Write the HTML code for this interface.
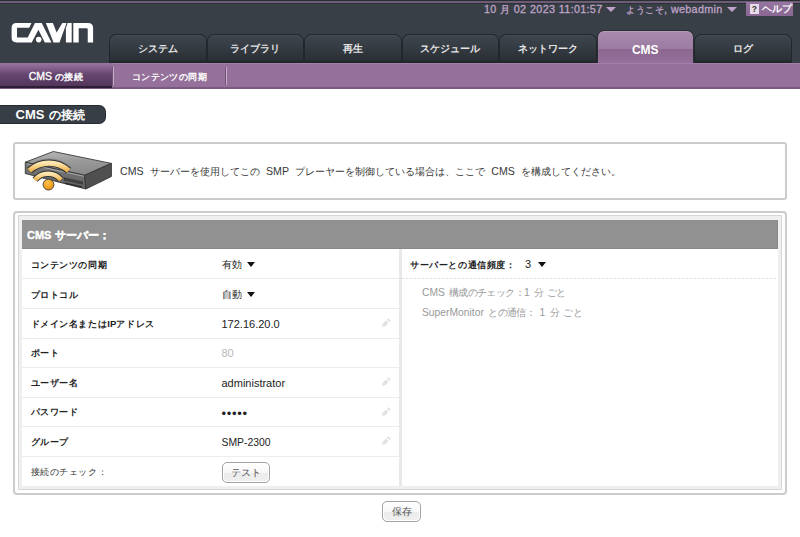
<!DOCTYPE html>
<html><head><meta charset="utf-8">
<style>
*{box-sizing:border-box;margin:0;padding:0}
html,body{width:800px;height:537px;overflow:hidden;background:#fff;font-family:"Liberation Sans",sans-serif;font-size:11px;color:#333}
.abs{position:absolute}
.j{font-size:var(--j,1em);letter-spacing:var(--js,0px)}
#hdr{position:absolute;left:0;top:0;width:800px;height:63px;background:#393f47}
#l0{position:absolute;left:0;top:0;width:800px;height:1px;background:#27302f}
#l1{position:absolute;left:0;top:1px;width:800px;height:2px;background:#6f5a79}
#l2{position:absolute;left:0;top:3px;width:800px;height:1px;background:#2a3434}
.tab{position:absolute;top:34px;height:29px;width:97.5px;border:1px solid #22272b;border-bottom:none;border-radius:7px 7px 0 0;
 background:linear-gradient(#3e454d,#353b42 45%,#2a3035 88%,#1f2428);color:#e4e4e4;font-weight:bold;font-size:11px;text-align:center;line-height:27px;--j:0.92em;
 box-shadow:inset 0 1px 0 #454c54}
.tab.on{top:30px;height:33px;background:linear-gradient(#a88bad,#9c7ca2 55%,#8c6891 55%,#94709a);color:#fff;line-height:39px;font-size:12px;border-color:#2a2f33;box-shadow:inset 0 1px 0 #b49ab8}
#sub{position:absolute;left:0;top:63px;width:800px;height:26px;background:#94709a;border-top:1px solid #a47fab;border-bottom:2px solid #7a5a81}
.subon{position:absolute;left:0;top:63px;width:112px;height:25px;background:linear-gradient(#9a77a2,#654670 50%,#53365c);border-bottom:2px solid #2e1b36}
.subt{position:absolute;top:63px;height:25px;line-height:26px;color:#fff;font-size:10.5px;font-weight:normal;-webkit-text-stroke:0.35px #fff;text-align:center;--j:9.25px;--js:0.4px}
.div1{position:absolute;top:67px;width:1px;height:18px;background:#6f5276}
.div2{position:absolute;top:67px;width:1px;height:18px;background:#c8b0cc}

.toptxt{position:absolute;top:2.2px;height:14px;line-height:14px;color:#bea3c6;font-size:10.8px;white-space:nowrap;--j:0.88em;word-spacing:0.3px;letter-spacing:0.3px;-webkit-text-stroke:0.3px #bea3c6}
.tri{display:inline-block;width:0;height:0;border-left:5px solid transparent;border-right:5px solid transparent;border-top:5.5px solid #bea3c6;vertical-align:middle;margin-left:4px;position:relative;top:-1px}
#help{position:absolute;left:746px;top:2px;width:47px;height:14px;background:linear-gradient(#9676a0,#8a6794);color:#fff;font-size:10.5px;line-height:15px;white-space:nowrap}
#help .q{position:absolute;left:3.75px;top:2px;width:9px;height:9.5px;background:#e6dde9;color:#333;font-weight:bold;font-size:8.5px;line-height:10px;text-align:center}
#help .t{position:absolute;left:16px;top:-1.5px;font-size:9.5px;font-weight:bold;letter-spacing:0.2px}
#sect{position:absolute;left:0;top:105px;width:106px;height:19px;background:#373e46;border:1px solid #252b30;border-left:none;border-radius:0 7px 7px 0;color:#fff;font-weight:bold;font-size:13px;--j:0.92em;word-spacing:1px;line-height:17px;padding-left:15.5px;white-space:nowrap}
#info{position:absolute;left:13px;top:142px;width:774px;height:58px;border:2px solid #cccccc;border-radius:3px;background:#fff}
#infotxt{position:absolute;left:120px;top:164px;line-height:14px;font-size:10.6px;--j:0.94em;word-spacing:3.3px;color:#383838;white-space:nowrap}
#form{position:absolute;left:13px;top:211px;width:774px;height:284px;border:2px solid #cccccc;border-radius:4px;background:#fff}
#inner{position:absolute;left:18px;top:215px;width:764px;height:275px;border:1px solid #d6d6d6;background:#efefef}
#content{position:absolute;left:22px;top:220px;width:756px;height:265.5px;background:#fff}
#fhead{position:absolute;left:22px;top:220px;width:755.5px;height:28.5px;background:#919191;box-shadow:inset -1px -1px 0 #888;color:#fff;font-weight:bold;font-size:11px;-webkit-text-stroke:0.4px #fff;line-height:30.5px;padding-left:5px;white-space:nowrap}
.row{position:absolute;left:22px;width:377px;height:1px;background:#ececec}
.lab{position:absolute;left:30.5px;height:14px;line-height:14px;color:#222;font-weight:bold;font-size:9.55px;--j:9.25px;--js:0.6px;white-space:nowrap}
.val{position:absolute;left:221.5px;height:14px;line-height:14px;color:#222;font-size:11px;white-space:nowrap}
.pen{position:absolute;left:381px;width:8px;height:8px}
#vdiv{position:absolute;left:398.5px;top:249px;width:3px;height:237px;background:#e8e8e8}
.btn{position:absolute;height:21px;border:1px solid #a3a3a3;border-radius:5px;background:linear-gradient(#fff,#f7f7f7 50%,#ebebeb 52%,#f0f0f0);color:#555;font-size:10px;text-align:center;line-height:19px;box-shadow:inset 0 0 0 1px #fff}
.dtri{display:inline-block;width:0;height:0;border-left:4.5px solid transparent;border-right:4.5px solid transparent;border-top:5px solid #111;margin-left:5px;vertical-align:middle;position:relative;top:0.5px}
</style></head>
<body>
<div id="hdr"></div>
<div id="l0"></div><div id="l1"></div><div id="l2"></div>

<svg class="abs" style="left:0;top:0" width="100" height="50" viewBox="0 0 100 50">
<path fill="#fff" d="M31.5,23 H16.5 Q11.6,23 11.6,27.9 V37.5 Q11.6,42.4 16.5,42.4 H31.7 L38.4,29.8 L44.8,42.4 H51.5 L41.7,23 H35 L27.7,37.5 H17 V27.7 H29.2 Z"/>
<path fill="#fff" d="M45.9,23 H52.9 L56.6,32.6 L62.3,23 H66.6 L59.5,42.4 H53.5 Z"/>
<path fill="#fff" d="M67.7,23 H71.7 V42.4 H65.9 V28 Z"/>
<path fill="#fff" d="M73.3,23 H88 Q93.1,23 93.1,28 V42.4 H87.75 V29.5 Q87.75,28.2 86.5,28.2 H78.7 V42.4 H73.3 Z"/>
<circle cx="38.7" cy="39.6" r="2.8" fill="#fff"/>
</svg>

<div class="tab" style="left:109px"><span class="j">システム</span></div>
<div class="tab" style="left:206.5px"><span class="j">ライブラリ</span></div>
<div class="tab" style="left:304px"><span class="j">再生</span></div>
<div class="tab" style="left:401.5px"><span class="j">スケジュール</span></div>
<div class="tab" style="left:499px"><span class="j">ネットワーク</span></div>
<div class="tab" style="left:694px"><span class="j">ログ</span></div>
<div class="tab on" style="left:596.5px">CMS</div>

<div id="sub"></div>
<div class="subon"></div>
<div class="subt" style="left:0;width:112px">CMS <span class="j">の接続</span></div>
<div class="div1" style="left:112px"></div><div class="div2" style="left:113px"></div>
<div class="subt" style="left:114px;width:111px"><span class="j">コンテンツの同期</span></div>
<div class="div1" style="left:225px"></div><div class="div2" style="left:226px"></div>


<div class="toptxt" style="left:484px">10 <span class="j">月</span> 02 2023 11:01:57<span class="tri"></span></div>
<div class="toptxt" style="left:626px;--j:0.85em;--js:0.5px"><span class="j">ようこそ</span>, webadmin<span class="tri"></span></div>
<div id="help"><span class="q">?</span><span class="t"><span class="j">ヘルプ</span></span></div>

<div id="sect">CMS <span class="j">の接続</span></div>

<div id="info"></div>
<svg class="abs" style="left:20px;top:145px" width="95" height="50" viewBox="20 145 95 50">
 <defs>
  <linearGradient id="gtop" x1="0" y1="0" x2="0.2" y2="1"><stop offset="0" stop-color="#bababa"/><stop offset="0.5" stop-color="#9a9a9a"/><stop offset="1" stop-color="#8a8a8a"/></linearGradient>
  <linearGradient id="gfr" x1="0" y1="0" x2="0" y2="1"><stop offset="0" stop-color="#7c7c7c"/><stop offset="1" stop-color="#606060"/></linearGradient>
  <linearGradient id="garc" x1="0" y1="0" x2="0" y2="1"><stop offset="0" stop-color="#fde7b0"/><stop offset="1" stop-color="#efb550"/></linearGradient>
  <radialGradient id="gdot" cx="0.4" cy="0.3" r="0.75"><stop offset="0" stop-color="#ffc24a"/><stop offset="1" stop-color="#e8900f"/></radialGradient>
 </defs>
 <path d="M25.3,162.2 L53.3,151.5 L111.4,163.4 L84.7,175.3 Z" fill="url(#gtop)" stroke="#3a3a3a" stroke-width="0.9" stroke-linejoin="round"/>
 <path d="M25.3,162.2 L84.7,175.3 L85.9,189 L25.3,173.5 Z" fill="url(#gfr)" stroke="#333" stroke-width="0.9" stroke-linejoin="round"/>
 <path d="M84.7,175.3 L111.4,163.4 L111.4,176.5 L85.9,189 Z" fill="#505050" stroke="#333" stroke-width="0.9" stroke-linejoin="round"/>
 <path d="M27,163.8 L84,176.3" stroke="#b8b8b8" stroke-width="0.8"/>
 <path d="M64,177.8 L82.5,181.8 L82.5,184.2 L64,180.2 Z" fill="#444" stroke="#2e2e2e" stroke-width="0.5"/>
 <path d="M65,182.5 L82,186.2 L82,187.6 L65,183.9 Z" fill="#2a2a2a"/>
 <path d="M29.4,170.6 A29.3,29.3 0 0 1 68.6,170.6" fill="none" stroke="#555" stroke-width="9" opacity="0.35"/>
 <path d="M29.4,170.6 A29.3,29.3 0 0 1 68.6,170.6" fill="none" stroke="#333" stroke-width="7"/>
 <path d="M35,179.8 A17,17 0 0 1 61,179.8" fill="none" stroke="#333" stroke-width="6.4"/>
 <path d="M29.4,170.6 A29.3,29.3 0 0 1 68.6,170.6" fill="none" stroke="url(#garc)" stroke-width="5.2"/>
 <path d="M35,179.8 A17,17 0 0 1 61,179.8" fill="none" stroke="url(#garc)" stroke-width="4.6"/>
 <circle cx="48.5" cy="184.6" r="5.4" fill="url(#gdot)" stroke="#3a3a3a" stroke-width="0.9"/>
</svg>
<div id="infotxt">CMS <span class="j">サーバーを使用してこの</span> SMP <span class="j">プレーヤーを制御している場合は、ここで</span> CMS <span class="j">を構成してください。</span></div>

<div id="form"></div>
<div id="inner"></div>
<div id="content"></div>
<div id="fhead">CMS <span class="j">サーバー：</span></div>
<div id="vdiv"></div>

<div class="row" style="top:278px"></div>
<div class="row" style="top:308px"></div>
<div class="row" style="top:337.5px"></div>
<div class="row" style="top:367px"></div>
<div class="row" style="top:396.5px"></div>
<div class="row" style="top:426px"></div>
<div class="row" style="top:456px"></div>

<div class="lab" style="top:258.2px"><span class="j">コンテンツの同期</span></div>
<div class="lab" style="top:287.7px"><span class="j">プロトコル</span></div>
<div class="lab" style="top:316.7px"><span class="j">ドメイン名または</span>IP<span class="j">アドレス</span></div>
<div class="lab" style="top:346.2px"><span class="j">ポート</span></div>
<div class="lab" style="top:375.7px"><span class="j">ユーザー名</span></div>
<div class="lab" style="top:405.2px"><span class="j">パスワード</span></div>
<div class="lab" style="top:434.7px"><span class="j">グループ</span></div>
<div class="lab" style="top:464.7px;font-weight:normal;color:#333"><span class="j">接続のチェック：</span></div>

<div class="val" style="top:258.3px;font-size:10px"><span class="j">有効</span><span class="dtri" style="top:-0.8px"></span></div>
<div class="val" style="top:287.8px;font-size:10px"><span class="j">自動</span><span class="dtri" style="top:-0.8px"></span></div>
<div class="val" style="top:316.8px">172.16.20.0</div>
<div class="val" style="top:346.3px;color:#b8b8b8">80</div>
<div class="val" style="top:375.8px">administrator</div>
<div class="val" style="top:406.5px;font-size:13px;letter-spacing:0.7px">&#8226;&#8226;&#8226;&#8226;&#8226;</div>
<div class="val" style="top:436.1px;font-size:10.4px">SMP-2300</div>
<svg class="abs" style="left:380px;top:317px" width="12" height="12" viewBox="0 0 12 12"><path d="M2,10 L2.8,6.6 L6,3.6 L8.4,6 L5.4,9.2 Z M6.8,2.6 L8.4,1.2 L10.8,3.6 L9.4,5.2 Z" fill="#e2e2e2"/></svg>
<svg class="abs" style="left:380px;top:376px" width="12" height="12" viewBox="0 0 12 12"><path d="M2,10 L2.8,6.6 L6,3.6 L8.4,6 L5.4,9.2 Z M6.8,2.6 L8.4,1.2 L10.8,3.6 L9.4,5.2 Z" fill="#e2e2e2"/></svg>
<svg class="abs" style="left:380px;top:405.5px" width="12" height="12" viewBox="0 0 12 12"><path d="M2,10 L2.8,6.6 L6,3.6 L8.4,6 L5.4,9.2 Z M6.8,2.6 L8.4,1.2 L10.8,3.6 L9.4,5.2 Z" fill="#e2e2e2"/></svg>
<svg class="abs" style="left:380px;top:435px" width="12" height="12" viewBox="0 0 12 12"><path d="M2,10 L2.8,6.6 L6,3.6 L8.4,6 L5.4,9.2 Z M6.8,2.6 L8.4,1.2 L10.8,3.6 L9.4,5.2 Z" fill="#e2e2e2"/></svg>
<div class="btn" style="left:221.5px;top:462px;width:48px"><span class="j">テスト</span></div>

<div class="lab" style="left:410px;top:258.2px"><span class="j">サーバーとの通信頻度：</span></div>
<div class="val" style="left:525px;top:256.5px">3<span class="dtri" style="margin-left:6.5px;top:-0.5px"></span></div>
<div class="abs" style="left:402px;top:278px;width:376px;height:1px;background:repeating-linear-gradient(90deg,#dedede 0 2.5px,transparent 2.5px 4px)"></div>
<div class="val" style="left:422px;top:286.3px;color:#999;font-size:10.3px;--j:10px;--js:-0.6px;word-spacing:1px">CMS <span class="j">構成のチェック：</span>1 <span class="j">分</span> <span class="j">ごと</span></div>
<div class="val" style="left:422px;top:306.1px;color:#999;font-size:10.3px;--j:10px;--js:-0.6px;word-spacing:1.5px">SuperMonitor <span class="j">との通信：</span> 1 <span class="j">分</span> <span class="j">ごと</span></div>

<div class="btn" style="left:382px;top:501px;width:39px"><span class="j">保存</span></div>
</body></html>
